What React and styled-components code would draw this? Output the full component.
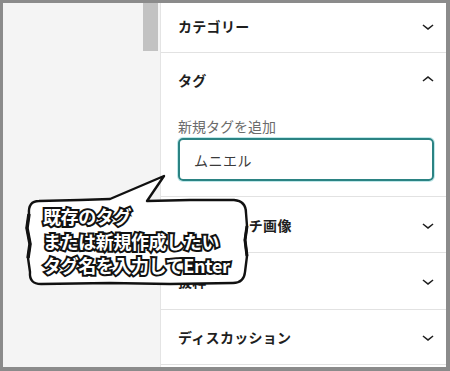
import React from 'react'
import styled, { createGlobalStyle } from 'styled-components'

const Global = createGlobalStyle`
  *, *::before, *::after { box-sizing: border-box; }
  html, body { margin: 0; padding: 0; }
  body { font-family: "Noto Sans CJK JP", "Noto Sans", sans-serif; }
`

const Frame = styled.div`
  width: 450px;
  height: 371px;
  padding: 3px 4px 4px 3px;
  background: #8b8b8b;
  position: relative;
  overflow: hidden;
`

const Inner = styled.div`
  display: flex;
  height: 100%;
`

const LeftPane = styled.div`
  width: 157px;
  background: #f4f4f4;
  display: flex;
  justify-content: flex-end;
  padding-right: 2px;
`

const Thumb = styled.div`
  width: 15px;
  height: 48px;
  background: #c2c2c2;
`

const Sidebar = styled.div`
  flex: 1;
  background: #fff;
  border-left: 1px solid #e4e4e4;
  display: flex;
  flex-direction: column;
`

const Header = styled.div`
  height: ${({ $h }) => $h}px;
  padding: 0 6px ${({ $pb }) => $pb || 0}px 17px;
  display: flex;
  align-items: center;
  justify-content: space-between;
  border-bottom: ${({ $open }) => ($open ? 'none' : '1px solid #e2e2e2')};
  flex-shrink: 0;
`

const Title = styled.span`
  font-size: 14px;
  font-weight: 600;
  color: #1e1e1e;
  letter-spacing: 0.3px;
`

const Body = styled.div`
  padding: 9px 12px 15px 17px;
  border-bottom: 1px solid #e2e2e2;
`

const Label = styled.div`
  font-size: 14px;
  line-height: 20px;
  color: #6b6b6b;
  margin-bottom: 2px;
`

const Input = styled.div`
  height: 43px;
  border: 2px solid #2b8383;
  border-radius: 5px;
  box-shadow: 0 0 0 1px #bfe8ea;
  padding-left: 14px;
  display: flex;
  align-items: center;
  font-size: 14px;
  color: #3a3a3a;
  letter-spacing: 0.5px;
`

const Callout = styled.div`
  position: absolute;
  left: 20px;
  top: 168px;
  width: 235px;
  height: 122px;
`

const BubbleSvg = styled.svg`
  position: absolute;
  inset: 0;
`

const BubbleText = styled.div`
  position: relative;
  padding: 36px 0 0 23px;
  font-size: 18px;
  line-height: 24.5px;
  font-weight: 700;
  color: #fff;
  -webkit-text-stroke: 4px #111;
  paint-order: stroke fill;
  letter-spacing: -0.4px;
  white-space: nowrap;
`

const Chevron = ({ up }) => (
  <svg width="24" height="24" viewBox="0 0 24 24">
    <path
      fill="#1e1e1e"
      d={up
        ? 'M6.5 12.4L12 8l5.5 4.4-.9 1.2L12 10l-4.6 3.6-.9-1.2z'
        : 'M17.5 11.6L12 16l-5.5-4.4.9-1.2L12 14l4.6-3.6 .9 1.2z'}
    />
  </svg>
)

const Row = ({ title, h, pb }) => (
  <Header $h={h} $pb={pb}>
    <Title>{title}</Title>
    <Chevron />
  </Header>
)

export default function App() {
  return (
    <>
      <Global />
      <Frame>
        <Inner>
          <LeftPane>
            <Thumb />
          </LeftPane>
          <Sidebar>
            <Row title="カテゴリー" h={50} pb={4} />
            <Header $h={54} $open>
              <Title>タグ</Title>
              <Chevron up />
            </Header>
            <Body>
              <Label>新規タグを追加</Label>
              <Input>ムニエル</Input>
            </Body>
            <Row title="アイキャッチ画像" h={56} />
            <Row title="抜粋" h={57} />
            <Row title="ディスカッション" h={55} />
          </Sidebar>
        </Inner>
        <Callout>
          <BubbleSvg width="235" height="122" viewBox="0 0 235 122">
            <path
              d="M19 33 L60 32 L90 31 L144 8 L127 33 L170 32 L214 32 Q226 33 226 45 L227 58 L225 72 L227 88 L225 104 Q224 115 213 115 L150 116 L90 115 L21 116 Q9 116 10 104 L8 90 L10 76 L7 60 L9 46 Q8 33 19 33 Z"
              fill="#fff"
              stroke="#111"
              strokeWidth="2.4"
              strokeLinejoin="round"
            />
            <path d="M9 46 L7 60 L10 76 L8 90" fill="none" stroke="#111" strokeWidth="3.5" />
            <path d="M227 58 L225 72 L227 88" fill="none" stroke="#111" strokeWidth="3" />
          </BubbleSvg>
          <BubbleText>
            既存のタグ<br />
            または新規作成したい<br />
            タグ名を入力してEnter
          </BubbleText>
        </Callout>
      </Frame>
    </>
  )
}
